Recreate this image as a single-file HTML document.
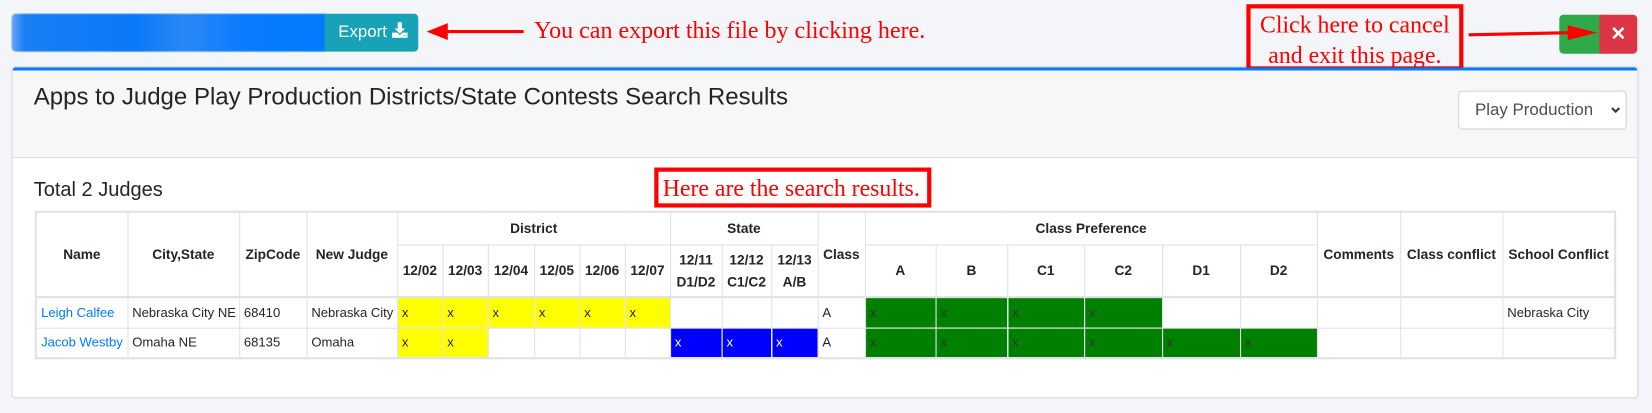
<!DOCTYPE html>
<html><head><meta charset="utf-8"><style>
*{box-sizing:border-box}
body{margin:0;width:1652px;height:413px;background:#f4f5f9;font-family:"Liberation Sans",sans-serif;position:relative;overflow:hidden;color:#212529}
#w{position:absolute;left:0;top:0;width:1568px;height:392px;transform:scale(1.05357);transform-origin:0 0}
.abs{position:absolute}
.blur{left:11px;top:13px;width:298px;height:36px;border-radius:4px 0 0 4px;background:linear-gradient(90deg,#6aa8f5 0,#1a7ff5 4%,#0a78f7 40%,#2a88f6 55%,#0a7bff 75%,#007bff 100%);filter:blur(.5px)}
.export{left:308px;top:13px;width:89px;height:36px;background:#17a2b8;border-radius:0 4px 4px 0;color:#fff;font-size:16px;line-height:36px;padding-left:13px}
.red{color:#f00;font-family:"Liberation Serif",serif;white-space:nowrap}
.card{left:12px;top:64px;width:1542px;height:313px;background:#fff;border-top:3px solid #007bff;border-radius:3px;box-shadow:0 0 2px rgba(0,0,0,.25)}
.chead{position:absolute;left:0;top:0;width:100%;height:83px;background:#f7f7f7;border-bottom:1px solid #ddd}
table{position:absolute;left:33px;top:200px;border-collapse:collapse;table-layout:fixed;width:1500px;font-size:13px}
td,th{border:1px solid #dee2e6;padding:0 4px;overflow:hidden;white-space:nowrap}
table{border:2px solid #dee2e6}
th{font-weight:bold;text-align:center;color:#212529}
thead tr:last-child th,thead th[rowspan]{border-bottom:2px solid #dee2e6}
td{color:#212529;height:29px;font-size:12.4px}
td a{color:#007bff}
.y{background:#ff0}.b{background:#00f;color:#fff}.g{background:#008000;color:#333}
</style></head><body><div id="w">
<div class="abs blur"></div>
<div class="abs export">Export <svg width="15" height="15" viewBox="0 0 15 15" style="vertical-align:-1px"><path d="M5.5 0h4v6h3l-5 5-5-5h3z" fill="#fff"/><path d="M0 10h5l2.5 2.5L10 10h5v5H0z" fill="#fff"/><rect x="11" y="12.5" width="1" height="1" fill="#17a2b8"/><rect x="13" y="12.5" width="1" height="1" fill="#17a2b8"/></svg></div>
<svg class="abs" style="left:403px;top:20px" width="96" height="20"><path d="M18 10H94" stroke="#f00" stroke-width="3"/><path d="M2 10L22 2V18z" fill="#f00"/></svg>
<div class="abs red" style="left:507px;top:16px;font-size:22.8px">You can export this file by clicking here.</div>
<div class="abs red" style="left:1183px;top:4px;width:206px;height:63px;border:4px solid #f00;text-align:center;font-size:22.6px;line-height:29px;padding-top:1px">Click here to cancel<br>and exit this page.</div>
<div class="abs" style="left:1480px;top:14px;width:41px;height:37px;background:#30a94a;border-radius:4px 0 0 4px"></div>
<div class="abs" style="left:1518px;top:14px;width:36px;height:37px;background:#dc3545;border-radius:0 4px 4px 0;color:#fff;font-size:18px;font-weight:bold;text-align:center;line-height:36px">✕</div>
<svg class="abs" style="left:1392px;top:22px" width="130" height="22"><path d="M2 11L100 9" stroke="#f00" stroke-width="3"/><path d="M96 2L124 9 96 16z" fill="#f00"/></svg>
<div class="abs card"><div class="chead"></div></div>
<div class="abs" style="left:32px;top:78px;font-size:22.8px;color:#212529">Apps to Judge Play Production Districts/State Contests Search Results</div>
<div class="abs" style="left:1384px;top:86px;width:160px;height:37px;background:#fff;border:1px solid #ced4da;border-radius:4px;font-size:16px;color:#495057;line-height:35px;padding-left:15px">Play Production<svg style="position:absolute;right:5px;top:14px" width="9" height="7" viewBox="0 0 9 7"><path d="M1 1.5l3.5 3.5 3.5-3.5" stroke="#333" stroke-width="2" fill="none"/></svg></div>
<div class="abs" style="left:32px;top:170px;font-size:19px">Total 2 Judges</div>
<div class="abs red" style="left:621px;top:159px;width:263px;height:38px;border:4px solid #f00;font-size:22.6px;line-height:32px;padding-left:4px">Here are the search results.</div>
<table>
<colgroup><col style="width:87px"><col style="width:106px"><col style="width:64px"><col style="width:86px"><col style="width:43px"><col style="width:43px"><col style="width:44px"><col style="width:43px"><col style="width:43px"><col style="width:43px"><col style="width:49px"><col style="width:47px"><col style="width:44px"><col style="width:45px"><col style="width:67px"><col style="width:68px"><col style="width:73px"><col style="width:74px"><col style="width:74px"><col style="width:73px"><col style="width:79px"><col style="width:97px"><col style="width:107px"></colgroup>
<thead>
<tr style="height:31px"><th rowspan="2">Name</th><th rowspan="2">City,State</th><th rowspan="2">ZipCode</th><th rowspan="2">New Judge</th><th colspan="6">District</th><th colspan="3">State</th><th rowspan="2">Class</th><th colspan="6">Class Preference</th><th rowspan="2">Comments</th><th rowspan="2">Class conflict</th><th rowspan="2">School Conflict</th></tr>
<tr style="height:50px"><th>12/02</th><th>12/03</th><th>12/04</th><th>12/05</th><th>12/06</th><th>12/07</th><th style="line-height:21px">12/11<br>D1/D2</th><th style="line-height:21px">12/12<br>C1/C2</th><th style="line-height:21px">12/13<br>A/B</th><th>A</th><th>B</th><th>C1</th><th>C2</th><th>D1</th><th>D2</th></tr>
</thead>
<tbody>
<tr><td><a>Leigh Calfee</a></td><td>Nebraska City NE</td><td>68410</td><td>Nebraska City</td><td class="y">x</td><td class="y">x</td><td class="y">x</td><td class="y">x</td><td class="y">x</td><td class="y">x</td><td></td><td></td><td></td><td>A</td><td class="g">x</td><td class="g">x</td><td class="g">x</td><td class="g">x</td><td></td><td></td><td></td><td></td><td>Nebraska City</td></tr>
<tr><td><a>Jacob Westby</a></td><td>Omaha NE</td><td>68135</td><td>Omaha</td><td class="y">x</td><td class="y">x</td><td></td><td></td><td></td><td></td><td class="b">x</td><td class="b">x</td><td class="b">x</td><td>A</td><td class="g">x</td><td class="g">x</td><td class="g">x</td><td class="g">x</td><td class="g">x</td><td class="g">x</td><td></td><td></td><td></td></tr>
</tbody></table>
</div></body></html>
